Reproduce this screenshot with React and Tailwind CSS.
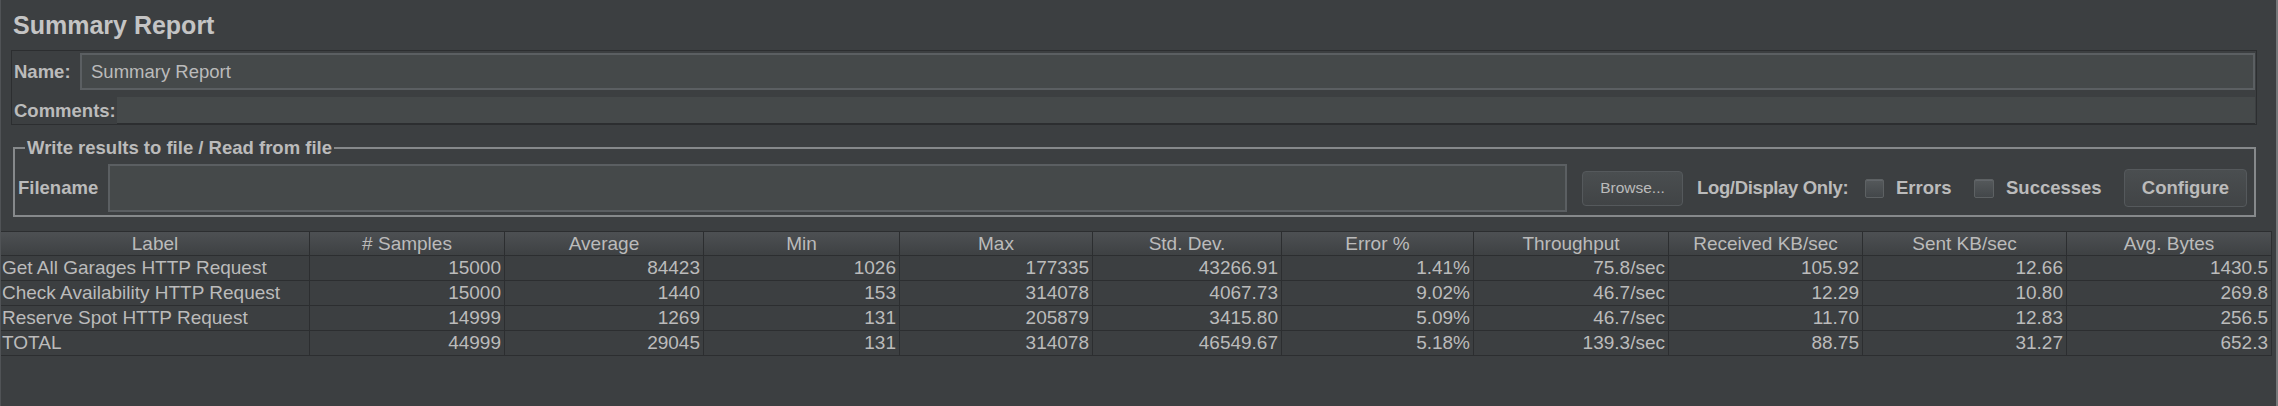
import React from 'react';

const columns = [
  'Label',
  '# Samples',
  'Average',
  'Min',
  'Max',
  'Std. Dev.',
  'Error %',
  'Throughput',
  'Received KB/sec',
  'Sent KB/sec',
  'Avg. Bytes'
];

const rows = [
  ['Get All Garages HTTP Request', '15000', '84423', '1026', '177335', '43266.91', '1.41%', '75.8/sec', '105.92', '12.66', '1430.5'],
  ['Check Availability HTTP Request', '15000', '1440', '153', '314078', '4067.73', '9.02%', '46.7/sec', '12.29', '10.80', '269.8'],
  ['Reserve Spot HTTP Request', '14999', '1269', '131', '205879', '3415.80', '5.09%', '46.7/sec', '11.70', '12.83', '256.5'],
  ['TOTAL', '44999', '29045', '131', '314078', '46549.67', '5.18%', '139.3/sec', '88.75', '31.27', '652.3']
];

const gridCols = 'grid grid-cols-[309px_195px_199px_196px_193px_189px_192px_195px_194px_204px_205px] w-[2271px]';

const Checkbox = ({ className }) => (
  <span className={`h-[19px] rounded-[2px] border border-[#5d6163] bg-gradient-to-b from-[#55595b] to-[#43474a] shadow-[inset_0_1px_0_#62666a] ${className}`} />
);

const App = () => {
  return (
    <div className="w-[2278px] h-[406px] overflow-hidden bg-[#3c3f41] text-[#bbbbbb] font-['Liberation_Sans',Arial,sans-serif] border-l border-l-[#505356] border-r-2 border-r-[#75787a] flex flex-col">
      {/* Title */}
      <div className="pt-[10px] pl-[12px] text-[25px] leading-[30px] font-bold text-[#c4c4c4]">Summary Report</div>

      {/* Name / comments panel */}
      <div className="mt-[10px] ml-[10px] mr-[19px] border border-[#2c2e30] pt-[2px] pl-[2px] pr-[1px] flex flex-col gap-[7px]">
        <div className="flex items-center h-[37px]">
          <span className="w-[66px] text-[18.5px] font-bold">Name:</span>
          <div className="flex-1 h-full border-2 border-[#5b5f62] bg-[#45494a] flex items-center pl-[9px] text-[18.5px]">
            Summary Report
          </div>
        </div>
        <div className="flex items-center h-[27px]">
          <span className="w-[103px] text-[18.5px] font-bold leading-[27px] whitespace-nowrap">Comments:</span>
          <div className="flex-1 h-full bg-[#45494a] border-b border-[#2c2e30]" />
        </div>
      </div>

      {/* Write results fieldset */}
      <fieldset className="mt-[12px] ml-[12px] mr-[20px] border-2 border-[#86898b] pt-[5px] pb-[3px] pl-[3px] pr-[6px]">
        <legend className="ml-[7px] px-[2px] text-[18.5px] leading-[22px] font-bold">Write results to file / Read from file</legend>
        <div className="flex items-center h-[48px]">
          <span className="w-[90px] text-[18.5px] font-bold">Filename</span>
          <div className="w-[1459px] flex-none h-full border-2 border-[#5b5f62] bg-[#45494a]" />
          <button className="ml-[15px] w-[101px] flex-none h-[35px] rounded-[4px] border border-[#55595c] bg-gradient-to-b from-[#4a4e50] to-[#414446] text-[15.5px] text-[#bbbbbb]">
            Browse...
          </button>
          <span className="ml-[14px] w-[154px] flex-none whitespace-nowrap text-[18.5px] tracking-[-0.35px] font-bold">Log/Display Only:</span>
          <Checkbox className="ml-[14px] w-[19px] flex-none" />
          <span className="ml-[12px] w-[58px] flex-none whitespace-nowrap text-[18.5px] font-bold">Errors</span>
          <Checkbox className="ml-[20px] w-[20px] flex-none" />
          <span className="ml-[12px] w-[99px] flex-none whitespace-nowrap text-[18.5px] font-bold">Successes</span>
          <button className="ml-[19px] w-[123px] flex-none h-[38px] rounded-[4px] border border-[#55595c] bg-gradient-to-b from-[#4a4e50] to-[#414446] text-[18.5px] font-bold text-[#bbbbbb]">
            Configure
          </button>
        </div>
      </fieldset>

      {/* Results table */}
      <div className="mt-[14px] flex flex-col">
        <div className={`${gridCols} h-[24px] border-t border-[#2c2e30] bg-gradient-to-b from-[#4d5053] to-[#3e4143]`}>
          {columns.map((c) => (
            <div key={c} className="border-r border-[#2c2e30] text-center text-[19px] leading-[23px] truncate">
              {c}
            </div>
          ))}
        </div>
        {rows.map((r) => (
          <div key={r[0]} className={`${gridCols} h-[25px] border-t border-[#2c2e30] bg-[#3c3f41]`}>
            {r.map((v, i) => (
              <div
                key={i}
                className={`border-r border-[#2c2e30] text-[19px] leading-[24px] whitespace-nowrap overflow-hidden ${i === 0 ? 'text-left pl-[1px]' : 'text-right pr-[3px]'}`}
              >
                {v}
              </div>
            ))}
          </div>
        ))}
        <div className="w-[2271px] border-t border-[#2c2e30]" />
      </div>
    </div>
  );
};

export default App;
